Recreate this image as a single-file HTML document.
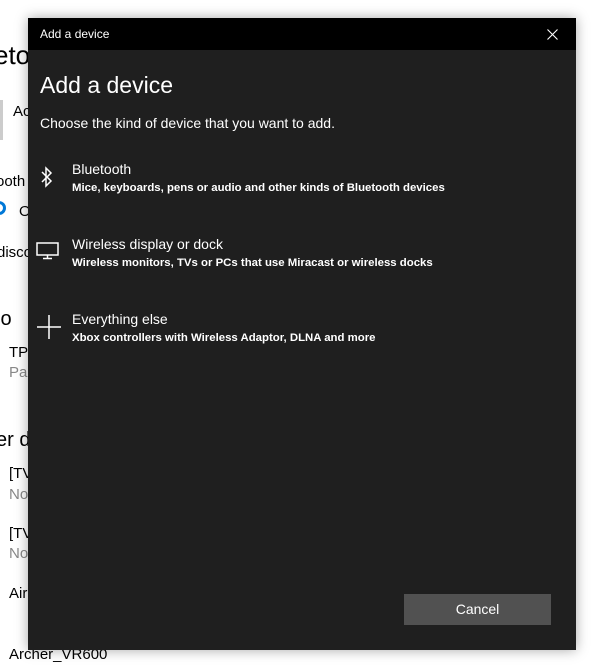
<!DOCTYPE html>
<html><head><style>
body{margin:0;width:607px;height:666px;background:#fff;position:relative;overflow:hidden;font-family:"Liberation Sans",sans-serif;}
.bg{position:absolute;color:#000;font-size:15px;white-space:nowrap}
.g{color:#888}
#dlg{position:absolute;left:28px;top:18px;width:548px;height:632px;background:#1f1f1f;box-shadow:0 0 12px rgba(0,0,0,.35);color:#fff}
#tb{height:32px;background:#000;font-size:12px;line-height:32px;padding-left:12px;position:relative}
#x{position:absolute;right:18px;top:11px}
h1{font-weight:normal;font-size:23px;margin:0;position:absolute;left:12px;top:54px}
.sub{position:absolute;left:12px;top:97px;font-size:14px}
.it{position:absolute;left:44px;font-size:14px}
.it b{display:block;font-size:11.4px;margin-top:5px}
.ic{position:absolute;left:8px}
#btn{position:absolute;left:376px;top:576px;width:147px;height:31px;background:#515151;font-size:14px;text-align:center;line-height:31px}
</style></head><body>
<div class="bg" style="left:-6px;top:40px;font-size:26px">eto</div>
<div style="position:absolute;left:0;top:100px;width:3px;height:40px;background:#ccc"></div>
<div class="bg" style="left:13px;top:103px;font-size:15px">Ac</div>
<div class="bg" style="left:-4px;top:173px">ooth</div>
<div style="position:absolute;left:-8px;top:201px;width:14px;height:14px;border:3px solid #0078d7;border-radius:50%;box-sizing:border-box;background:#fff"></div>
<div class="bg" style="left:19px;top:203px">O</div>
<div class="bg" style="left:-3px;top:244px">disco</div>
<div class="bg" style="left:-4px;top:308px;font-size:20px">io</div>
<div class="bg" style="left:9px;top:344px">TP</div>
<div class="bg g" style="left:9px;top:364px">Pai</div>
<div class="bg" style="left:-4px;top:429px;font-size:20px">er d</div>
<div class="bg" style="left:9px;top:465px">[TV</div>
<div class="bg g" style="left:9px;top:486px">No</div>
<div class="bg" style="left:9px;top:525px">[TV</div>
<div class="bg g" style="left:9px;top:545px">No</div>
<div class="bg" style="left:9px;top:585px">Air</div>
<div class="bg" style="left:9px;top:646px">Archer_VR600</div>
<div id="dlg">
<div id="tb">Add a device<svg id="x" width="11" height="11" viewBox="0 0 11 11"><path d="M0.5 0.5L10.5 10.5M10.5 0.5L0.5 10.5" stroke="#fff" stroke-width="1.1"/></svg></div>
<h1>Add a device</h1>
<div class="sub">Choose the kind of device that you want to add.</div>
<svg class="ic" style="left:12px;top:148px" width="14" height="22" viewBox="0 0 14 22"><path d="M2 6 L11 15 L6 20 V2 L11 7 L2 16" fill="none" stroke="#fff" stroke-width="1.5"/></svg>
<div class="it" style="top:143px">Bluetooth<b>Mice, keyboards, pens or audio and other kinds of Bluetooth devices</b></div>
<svg class="ic" style="left:8px;top:224px" width="24" height="18" viewBox="0 0 24 18"><rect x="1" y="1" width="21" height="12" fill="none" stroke="#fff" stroke-width="1.5"/><path d="M11.5 13v3M7 16.5h9" stroke="#fff" stroke-width="1.5"/></svg>
<div class="it" style="top:218px">Wireless display or dock<b>Wireless monitors, TVs or PCs that use Miracast or wireless docks</b></div>
<svg class="ic" style="left:8px;top:296px" width="26" height="26" viewBox="0 0 26 26"><path d="M13 1v24M1 13h24" stroke="#fff" stroke-width="1.5"/></svg>
<div class="it" style="top:293px">Everything else<b>Xbox controllers with Wireless Adaptor, DLNA and more</b></div>
<div id="btn">Cancel</div>
</div>
</body></html>
